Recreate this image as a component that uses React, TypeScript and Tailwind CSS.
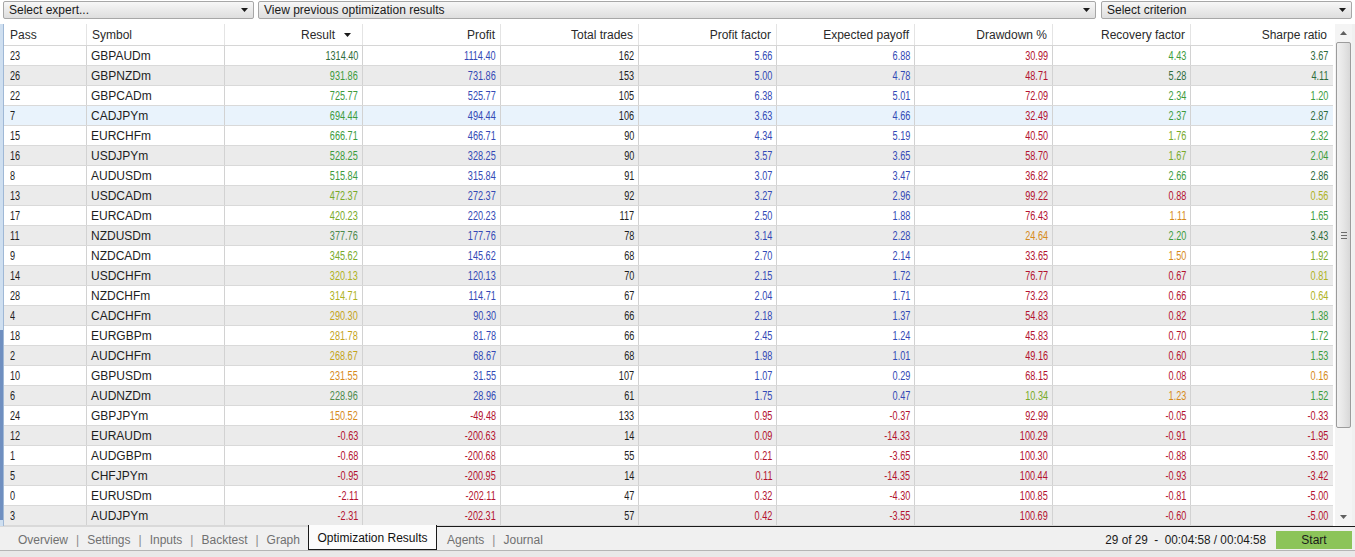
type C = 'k' | 'b' | 'r' | 'g1' | 'g2' | 'g3' | 'g4' | 'y' | 'o1' | 'o'

const colorClass: Record<C, string> = {
  k: 'text-[#1e1e1e]',
  b: 'text-[#3349b5]',
  r: 'text-[#b3122f]',
  g1: 'text-[#2f6b3c]',
  g2: 'text-[#3c9b3c]',
  g3: 'text-[#78aa28]',
  g4: 'text-[#4c8a4c]',
  y: 'text-[#aeb222]',
  o1: 'text-[#c4a41c]',
  o: 'text-[#d68a1a]',
}

type Cell = [string, C]
type Row = { pass: string; symbol: string; cells: Cell[] }

const row = (pass: string, symbol: string, ...cells: Cell[]): Row => ({ pass, symbol, cells })

const rows: Row[] = [
  row('23', 'GBPAUDm', ['1314.40', 'g1'], ['1114.40', 'b'], ['162', 'k'], ['5.66', 'b'], ['6.88', 'b'], ['30.99', 'r'], ['4.43', 'g2'], ['3.67', 'g1']),
  row('26', 'GBPNZDm', ['931.86', 'g2'], ['731.86', 'b'], ['153', 'k'], ['5.00', 'b'], ['4.78', 'b'], ['48.71', 'r'], ['5.28', 'g1'], ['4.11', 'g1']),
  row('22', 'GBPCADm', ['725.77', 'g2'], ['525.77', 'b'], ['105', 'k'], ['6.38', 'b'], ['5.01', 'b'], ['72.09', 'r'], ['2.34', 'g2'], ['1.20', 'g2']),
  row('7', 'CADJPYm', ['694.44', 'g2'], ['494.44', 'b'], ['106', 'k'], ['3.63', 'b'], ['4.66', 'b'], ['32.49', 'r'], ['2.37', 'g2'], ['2.87', 'g1']),
  row('15', 'EURCHFm', ['666.71', 'g2'], ['466.71', 'b'], ['90', 'k'], ['4.34', 'b'], ['5.19', 'b'], ['40.50', 'r'], ['1.76', 'g3'], ['2.32', 'g2']),
  row('16', 'USDJPYm', ['528.25', 'g2'], ['328.25', 'b'], ['90', 'k'], ['3.57', 'b'], ['3.65', 'b'], ['58.70', 'r'], ['1.67', 'g3'], ['2.04', 'g2']),
  row('8', 'AUDUSDm', ['515.84', 'g2'], ['315.84', 'b'], ['91', 'k'], ['3.07', 'b'], ['3.47', 'b'], ['36.82', 'r'], ['2.66', 'g2'], ['2.86', 'g1']),
  row('13', 'USDCADm', ['472.37', 'g3'], ['272.37', 'b'], ['92', 'k'], ['3.27', 'b'], ['2.96', 'b'], ['99.22', 'r'], ['0.88', 'r'], ['0.56', 'y']),
  row('17', 'EURCADm', ['420.23', 'g3'], ['220.23', 'b'], ['117', 'k'], ['2.50', 'b'], ['1.88', 'b'], ['76.43', 'r'], ['1.11', 'o'], ['1.65', 'g2']),
  row('11', 'NZDUSDm', ['377.76', 'g4'], ['177.76', 'b'], ['78', 'k'], ['3.14', 'b'], ['2.28', 'b'], ['24.64', 'o'], ['2.20', 'g2'], ['3.43', 'g1']),
  row('9', 'NZDCADm', ['345.62', 'g3'], ['145.62', 'b'], ['68', 'k'], ['2.70', 'b'], ['2.14', 'b'], ['33.65', 'r'], ['1.50', 'o'], ['1.92', 'g3']),
  row('14', 'USDCHFm', ['320.13', 'y'], ['120.13', 'b'], ['70', 'k'], ['2.15', 'b'], ['1.72', 'b'], ['76.77', 'r'], ['0.67', 'r'], ['0.81', 'y']),
  row('28', 'NZDCHFm', ['314.71', 'y'], ['114.71', 'b'], ['67', 'k'], ['2.04', 'b'], ['1.71', 'b'], ['73.23', 'r'], ['0.66', 'r'], ['0.64', 'y']),
  row('4', 'CADCHFm', ['290.30', 'o1'], ['90.30', 'b'], ['66', 'k'], ['2.18', 'b'], ['1.37', 'b'], ['54.83', 'r'], ['0.82', 'r'], ['1.38', 'g2']),
  row('18', 'EURGBPm', ['281.78', 'o1'], ['81.78', 'b'], ['66', 'k'], ['2.45', 'b'], ['1.24', 'b'], ['45.83', 'r'], ['0.70', 'r'], ['1.72', 'g2']),
  row('2', 'AUDCHFm', ['268.67', 'o1'], ['68.67', 'b'], ['68', 'k'], ['1.98', 'b'], ['1.01', 'b'], ['49.16', 'r'], ['0.60', 'r'], ['1.53', 'g2']),
  row('10', 'GBPUSDm', ['231.55', 'o'], ['31.55', 'b'], ['107', 'k'], ['1.07', 'b'], ['0.29', 'b'], ['68.15', 'r'], ['0.08', 'r'], ['0.16', 'o']),
  row('6', 'AUDNZDm', ['228.96', 'g4'], ['28.96', 'b'], ['61', 'k'], ['1.75', 'b'], ['0.47', 'b'], ['10.34', 'g3'], ['1.23', 'o'], ['1.52', 'g2']),
  row('24', 'GBPJPYm', ['150.52', 'o'], ['-49.48', 'r'], ['133', 'k'], ['0.95', 'r'], ['-0.37', 'r'], ['92.99', 'r'], ['-0.05', 'r'], ['-0.33', 'r']),
  row('12', 'EURAUDm', ['-0.63', 'r'], ['-200.63', 'r'], ['14', 'k'], ['0.09', 'r'], ['-14.33', 'r'], ['100.29', 'r'], ['-0.91', 'r'], ['-1.95', 'r']),
  row('1', 'AUDGBPm', ['-0.68', 'r'], ['-200.68', 'r'], ['55', 'k'], ['0.21', 'r'], ['-3.65', 'r'], ['100.30', 'r'], ['-0.88', 'r'], ['-3.50', 'r']),
  row('5', 'CHFJPYm', ['-0.95', 'r'], ['-200.95', 'r'], ['14', 'k'], ['0.11', 'r'], ['-14.35', 'r'], ['100.44', 'r'], ['-0.93', 'r'], ['-3.42', 'r']),
  row('0', 'EURUSDm', ['-2.11', 'r'], ['-202.11', 'r'], ['47', 'k'], ['0.32', 'r'], ['-4.30', 'r'], ['100.85', 'r'], ['-0.81', 'r'], ['-5.00', 'r']),
  row('3', 'AUDJPYm', ['-2.31', 'r'], ['-202.31', 'r'], ['57', 'k'], ['0.42', 'r'], ['-3.55', 'r'], ['100.69', 'r'], ['-0.60', 'r'], ['-5.00', 'r']),
]

const headers = ['Profit', 'Total trades', 'Profit factor', 'Expected payoff', 'Drawdown %', 'Recovery factor', 'Sharpe ratio']

const gridCols = 'grid grid-cols-[83px_repeat(8,138px)_142px]'

function Caret() {
  return (
    <svg width="7" height="4" viewBox="0 0 7 4" className="shrink-0">
      <path d="M0 0h7L3.5 4z" fill="#1a1a1a" />
    </svg>
  )
}

function Select({ label, width }: { label: string; width: string }) {
  return (
    <div className={`${width} h-[18px] flex items-center justify-between pl-[5px] pr-[5px] rounded-[2px] border border-[#a7a7a7] bg-gradient-to-b from-[#f7f7f7] to-[#dedede] text-[12px] text-[#1a1a1a]`}>
      <span>{label}</span>
      <Caret />
    </div>
  )
}

function Num({ v, left }: { v: string; left?: boolean }) {
  return (
    <span className={`inline-block scale-x-[0.76] ${left ? 'origin-left' : 'origin-right'}`}>{v}</span>
  )
}

function Scrollbar() {
  return (
    <div className="w-[17px] ml-[2px] flex flex-col items-center bg-[#f4f4f4]">
      <div className="h-[18px] flex items-center justify-center">
        <svg width="7" height="4" viewBox="0 0 7 4">
          <path d="M0 4h7L3.5 0z" fill="#606060" />
        </svg>
      </div>
      <div className="w-[15px] h-[386px] rounded-[2px] border border-[#9c9c9c] bg-gradient-to-r from-[#f1f1f1] via-[#e6e6e6] to-[#d8d8d8] flex items-center justify-center">
        <div className="flex flex-col gap-[2px]">
          <div className="w-[6px] h-px bg-[#6d6d6d]" />
          <div className="w-[6px] h-px bg-[#6d6d6d]" />
          <div className="w-[6px] h-px bg-[#6d6d6d]" />
        </div>
      </div>
      <div className="flex-1" />
      <div className="h-[18px] flex items-center justify-center">
        <svg width="7" height="4" viewBox="0 0 7 4">
          <path d="M0 0h7L3.5 4z" fill="#606060" />
        </svg>
      </div>
    </div>
  )
}

function TabBar() {
  const left = ['Overview', 'Settings', 'Inputs', 'Backtest', 'Graph']
  return (
    <div className="h-[24px] flex bg-[#f0f0f0] text-[12px]">
      <div className="w-[308px] flex items-center pt-[2px] pl-[18px] text-[#707070] border-t border-[#d9d9d9]">
        {left.map((t, i) => (
          <span key={t} className="flex items-center">
            {i > 0 && <span className="mx-[8px] text-[#8a8a8a]">|</span>}
            {t}
          </span>
        ))}
      </div>
      <div className="w-[129px] -mt-px pt-[2px] flex items-center justify-center bg-[#fcfcfc] border-x border-b border-[#1a1a1a] text-[#111]">
        Optimization Results
      </div>
      <div className="flex-1 flex items-center pt-[2px] border-t border-[#1a1a1a]">
        <span className="ml-[10px] text-[#707070]">Agents</span>
        <span className="mx-[8px] text-[#8a8a8a]">|</span>
        <span className="text-[#707070]">Journal</span>
        <div className="flex-1" />
        <span className="text-[#1a1a1a] mr-[10px] whitespace-pre">
          <span className="inline-block scale-x-[0.98] origin-right">29 of 29  -  00:04:58 / 00:04:58</span>
        </span>
        <div className="w-[76px] h-[18px] mr-[3px] flex items-center justify-center bg-[#8cc459] text-[#1a1a1a]">
          Start
        </div>
      </div>
    </div>
  )
}

export default function App() {
  return (
    <div className="w-[1355px] h-[557px] overflow-hidden flex flex-col bg-white font-['Liberation_Sans',Arial,sans-serif] text-[12px] text-[#1e1e1e]">
      {/* toolbar */}
      <div className="h-[24px] flex pl-[3px] pt-[1px]">
        <Select label="Select expert..." width="w-[251px]" />
        <div className="ml-[4px]">
          <Select label="View previous optimization results" width="w-[838px]" />
        </div>
        <div className="ml-[5px]">
          <Select label="Select criterion" width="w-[251px]" />
        </div>
      </div>

      {/* table area */}
      <div className="flex-1 min-h-0 flex">
        <div className="w-[4px] flex flex-col bg-[#cfdff0] border-r border-[#9fb8d6]">
          <div className="flex-1" />
          <div className="h-[190px] mb-[6px] bg-[#6f8fc0]" />
        </div>
        <div className="w-[1329px] flex flex-col">
          <div className={`${gridCols} h-[22px] border-b border-[#d6d6d6] text-[#2a2a2a]`}>
            <div className="flex items-center pl-[6px] border-r border-[#e4e4e4]">Pass</div>
            <div className="flex items-center pl-[5px] border-r border-[#e4e4e4]">Symbol</div>
            <div className="flex items-center justify-end gap-[9px] pr-[11px] border-r border-[#e4e4e4]">
              Result
              <Caret />
            </div>
            {headers.map((h) => (
              <div key={h} className="flex items-center justify-end pr-[5px] border-r border-[#e4e4e4] last:border-r-0 last:pr-[6px]">
                {h}
              </div>
            ))}
          </div>
          {rows.map((r, i) => (
            <div
              key={r.pass}
              className={`${gridCols} h-[20px] border-b border-[#d9d9d9] ${
                i === 3 ? 'bg-[#e9f3fc]' : i % 2 === 1 ? 'bg-[#ebebeb]' : 'bg-white'
              }`}
            >
              <div className="flex items-center pl-[6px] border-r border-[#d2d2d2]">
                <Num v={r.pass} left />
              </div>
              <div className="flex items-center pl-[4px] border-r border-[#d2d2d2]">{r.symbol}</div>
              {r.cells.map(([v, c], j) => (
                <div
                  key={j}
                  className={`flex items-center justify-end pr-[4px] border-r border-[#d2d2d2] last:border-r-0 last:pr-[5px] ${colorClass[c]}`}
                >
                  <Num v={v} />
                </div>
              ))}
            </div>
          ))}
        </div>
        <Scrollbar />
        <div className="w-[3px] bg-[#f0f0f0]" />
      </div>

      <TabBar />
      <div className="h-[7px] bg-[#e9e9e9] border-t border-[#b5b5b5]" />
    </div>
  )
}
